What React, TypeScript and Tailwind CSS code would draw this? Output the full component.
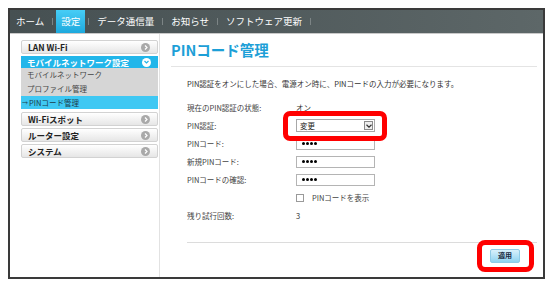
import React from 'react';

const font = { fontFamily: '"Noto Sans CJK JP", "Noto Sans", sans-serif' };

function NavSep() {
  return <span className="w-px h-[7px] bg-[#7c8485]" />;
}

function Circle({ active }: { active?: boolean }) {
  if (active) {
    return (
      <span className="w-[9px] h-[9px] rounded-full bg-white flex items-center justify-center">
        <svg width="5" height="4" viewBox="0 0 5 4">
          <path d="M0.5 1 L2.5 3 L4.5 1" stroke="#22b4e8" strokeWidth="1.2" fill="none" />
        </svg>
      </span>
    );
  }
  return (
    <span className="w-[9px] h-[9px] rounded-full bg-[#a9a9a9] flex items-center justify-center">
      <svg width="4" height="5" viewBox="0 0 4 5">
        <path d="M1 0.5 L3 2.5 L1 4.5" stroke="#fff" strokeWidth="1.2" fill="none" />
      </svg>
    </span>
  );
}

function SideItem({ label }: { label: string }) {
  return (
    <div className="h-[14px] rounded-[2px] border border-[#d2d2d2] bg-gradient-to-b from-white to-[#e6e6e6] flex items-center justify-between pl-[6px] pr-[7px]">
      <span className="text-[8.5px] font-bold text-[#222] leading-none">{label}</span>
      <Circle />
    </div>
  );
}

function Row({ label, children }: { label: string; children?: React.ReactNode }) {
  return (
    <div className="flex items-center h-[18px]">
      <span className="w-[109px] text-[7.5px] text-[#444] leading-none">{label}</span>
      <div className="flex items-center">{children}</div>
    </div>
  );
}

function PinInput() {
  return (
    <div className="w-[79px] h-[12px] border border-[#b4b4b4] bg-white flex items-center pl-[5px] gap-[1px]">
      {[0, 1, 2, 3].map((i) => (
        <span key={i} className="w-[3px] h-[3px] rounded-full bg-black" />
      ))}
    </div>
  );
}

export default function App() {
  return (
    <div className="w-[552px] h-[287px] bg-white pt-[8px] pl-[8px]" style={font}>
      <div className="w-[537px] h-[271px] border-2 border-[#3a3a3a] flex flex-col">
        {/* top nav */}
        <div className="h-[23px] flex items-center bg-gradient-to-r from-[#465052] to-[#5d6768] text-[9.5px] text-white">
          <span className="pl-[6px] pr-[8px]">ホーム</span>
          <NavSep />
          <span className="ml-[3px] mr-[3px] h-full w-[29px] flex items-center justify-center bg-gradient-to-b from-[#46cdf6] to-[#1ca9dd]">設定</span>
          <NavSep />
          <span className="px-[8px]">データ通信量</span>
          <NavSep />
          <span className="px-[8px]">お知らせ</span>
          <NavSep />
          <span className="px-[8px]">ソフトウェア更新</span>
          <NavSep />
        </div>
        <div className="h-px bg-[#c9c9c9]" />
        <div className="flex flex-1">
          {/* sidebar */}
          <div className="w-[150px] border-r border-[#e2e2e2] pl-[11px] pr-[1px] pt-[6px] flex flex-col">
            <SideItem label="LAN Wi-Fi" />
            <div className="mt-[2px] h-[12px] bg-[#22b6ea] flex items-center justify-between pl-[6px] pr-[7px]">
              <span className="text-[8.5px] font-bold text-white leading-none">モバイルネットワーク設定</span>
              <Circle active />
            </div>
            <div className="bg-[#d6d6d6] flex flex-col text-[7.5px] text-[#444]">
              <div className="h-[14px] flex items-center pl-[6px]">モバイルネットワーク</div>
              <div className="h-[14px] flex items-center pl-[6px]">プロファイル管理</div>
              <div className="h-[13px] flex items-center pl-[1px] bg-[#3fc8f3] text-[#1b3c4a]">
                <span className="text-[6px] mr-[1px]">→</span>PINコード管理
              </div>
            </div>
            <div className="mt-[3px] flex flex-col gap-[2px]">
              <SideItem label="Wi-Fiスポット" />
              <SideItem label="ルーター設定" />
              <SideItem label="システム" />
            </div>
          </div>
          {/* main */}
          <div className="flex-1 pl-[11px] pr-[6px] pt-[9px] flex flex-col">
            <div className="text-[14.5px] font-bold text-[#1d9fd7] leading-none h-[16px]">PINコード管理</div>
            <div className="mt-[7px] h-px bg-[#e4e4e4]" />
            <div className="pl-[16px] mt-[13px] text-[7.5px] text-[#333] leading-none">
              PIN認証をオンにした場合、電源オン時に、PINコードの入力が必要になります。
            </div>
            <div className="pl-[16px] mt-[11px] flex flex-col">
              <Row label="現在のPIN認証の状態:">
                <span className="text-[7.5px] text-[#333] leading-none">オン</span>
              </Row>
              <Row label="PIN認証:">
                <div className="relative">
                  <div className="w-[79px] h-[13px] border border-[#a8a8a8] bg-white flex items-center justify-between pl-[3px] pr-[1px]">
                    <span className="text-[7.5px] text-[#222] leading-none">変更</span>
                    <span className="w-[9px] h-[9px] border border-[#8a8a8a] bg-[#eee] flex items-center justify-center">
                      <svg width="6" height="4" viewBox="0 0 6 4">
                        <path d="M0.5 0.8 L3 3.2 L5.5 0.8" stroke="#333" strokeWidth="1.2" fill="none" />
                      </svg>
                    </span>
                  </div>
                  <div className="absolute left-[-13px] top-[-8px] w-[104px] h-[30px] border-[5px] border-[#ff0000] rounded-[7px]" />
                </div>
              </Row>
              <Row label="PINコード:"><PinInput /></Row>
              <Row label="新規PINコード:"><PinInput /></Row>
              <Row label="PINコードの確認:"><PinInput /></Row>
              <Row label="">
                <span className="w-[8px] h-[8px] border border-[#9a9a9a] bg-white" />
                <span className="ml-[8px] text-[7.5px] text-[#444] leading-none">PINコードを表示</span>
              </Row>
              <Row label="残り試行回数:">
                <span className="text-[7.5px] text-[#333] leading-none">3</span>
              </Row>
            </div>
            <div className="ml-[16px] mt-[17px] h-px bg-[#dcdcdc]" />
            <div className="flex justify-end pr-[17px] mt-[6px]">
              <div className="relative">
                <div className="w-[30px] h-[14px] rounded-[2px] border border-[#8fcbe6] bg-gradient-to-b from-[#d8f1fb] to-[#8ed3f0] flex items-center justify-center">
                  <span className="text-[7px] font-bold text-[#1a2a40] leading-none">適用</span>
                </div>
                <div className="absolute left-[-13px] top-[-9px] w-[57px] h-[32px] border-[5px] border-[#ff0000] rounded-[8px]" />
              </div>
            </div>
          </div>
        </div>
      </div>
    </div>
  );
}
